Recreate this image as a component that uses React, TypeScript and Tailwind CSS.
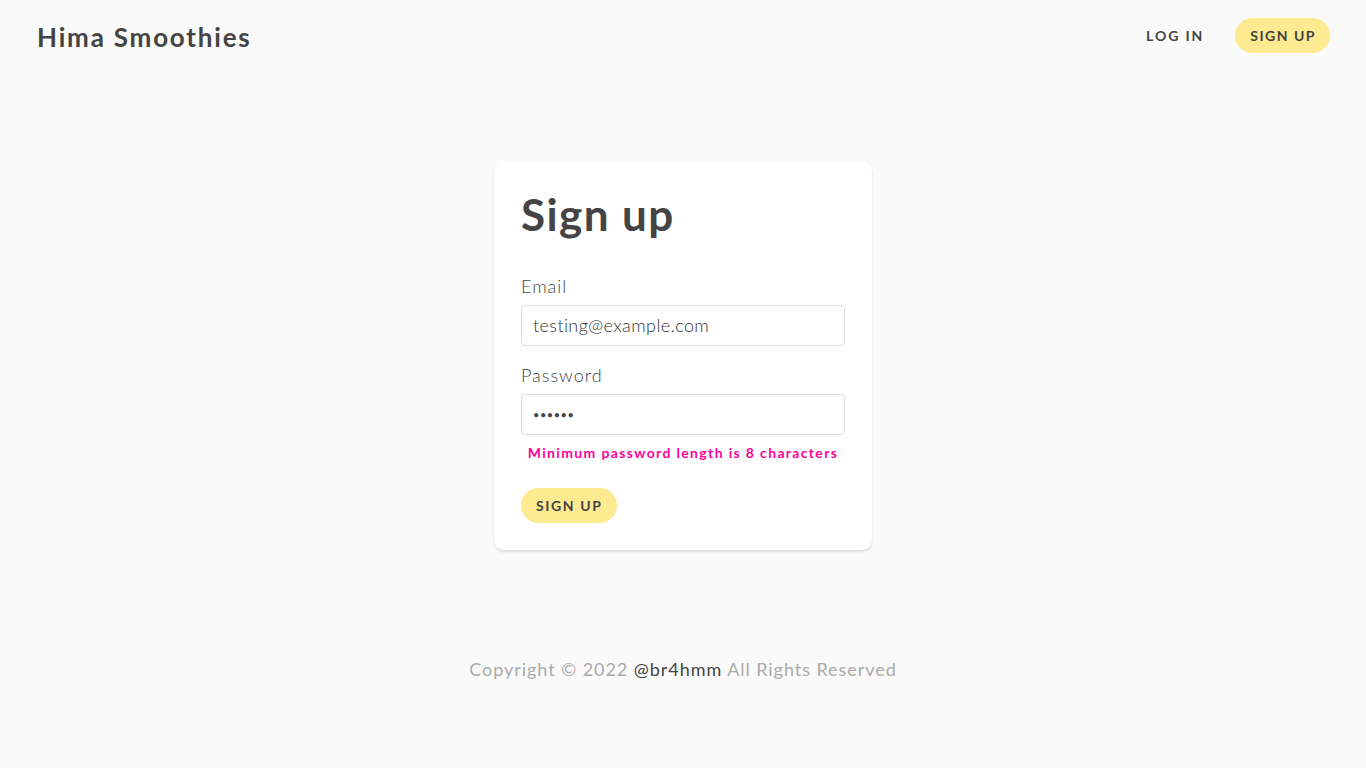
import React from "react";

export default function App() {
  return (
    <div
      className="min-h-screen bg-[#fafafa] text-[#444] flex flex-col"
      style={{ fontFamily: "Lato, 'Noto Sans', sans-serif" }}
    >
      {/* Nav */}
      <nav className="flex items-center justify-between pl-[37px] pr-[36px] h-[74px]">
        <h1 className="text-[26px] font-bold tracking-[1.8px] text-[#444]">Hima Smoothies</h1>
        <ul className="flex items-center gap-[31px] mb-[4px]">
          <li className="text-[14px] font-bold tracking-[1.9px] text-[#444] uppercase">Log in</li>
          <li>
            <button className="h-[35px] pl-[15px] pr-[14px] rounded-full bg-[#feea90] text-[14px] font-bold tracking-[1.5px] text-[#444] uppercase">
              Sign up
            </button>
          </li>
        </ul>
      </nav>

      {/* Form card */}
      <div className="flex justify-center pt-[87px]">
        <form className="w-[378px] bg-white rounded-[10px] shadow-[0_2px_3px_rgba(0,0,0,0.12)] px-[27px] pt-[27px] pb-[27px]">
          <h2 className="text-[44px] font-bold leading-[1.2] tracking-[1.4px] text-[#444]">Sign up</h2>

          <label className="block mt-[34px] text-[18px] font-light tracking-[1px] text-[#444] leading-[22px]">Email</label>
          <input
            type="text"
            defaultValue="testing@example.com"
            className="block mt-[8px] w-full h-[41px] px-[11px] border border-[#ddd] rounded-[4px] text-[18px] font-light tracking-[0.4px] text-[#333] outline-none"
          />

          <label className="block mt-[18px] text-[18px] font-light tracking-[1px] text-[#444] leading-[22px]">Password</label>
          <input
            type="password"
            defaultValue="123456"
            className="block mt-[8px] w-full h-[41px] px-[11px] border border-[#ddd] rounded-[4px] text-[11px] tracking-[0.5px] text-[#444] outline-none"
          />
          <div className="mt-[9px] text-center text-[14px] font-bold tracking-[1.35px] text-[#ff0099] leading-[17px]">
            Minimum password length is 8 characters
          </div>

          <button
            type="button"
            className="mt-[27px] h-[35px] px-[15px] rounded-full bg-[#feea90] text-[14px] font-bold tracking-[1.6px] text-[#444] uppercase"
          >
            Sign up
          </button>
        </form>
      </div>

      {/* Footer */}
      <footer className="mt-[106px] text-center text-[18px] tracking-[0.95px] text-[#aaa]">
        Copyright © 2022 <span className="text-[#444]">@br4hmm</span> All Rights Reserved
      </footer>
    </div>
  );
}
